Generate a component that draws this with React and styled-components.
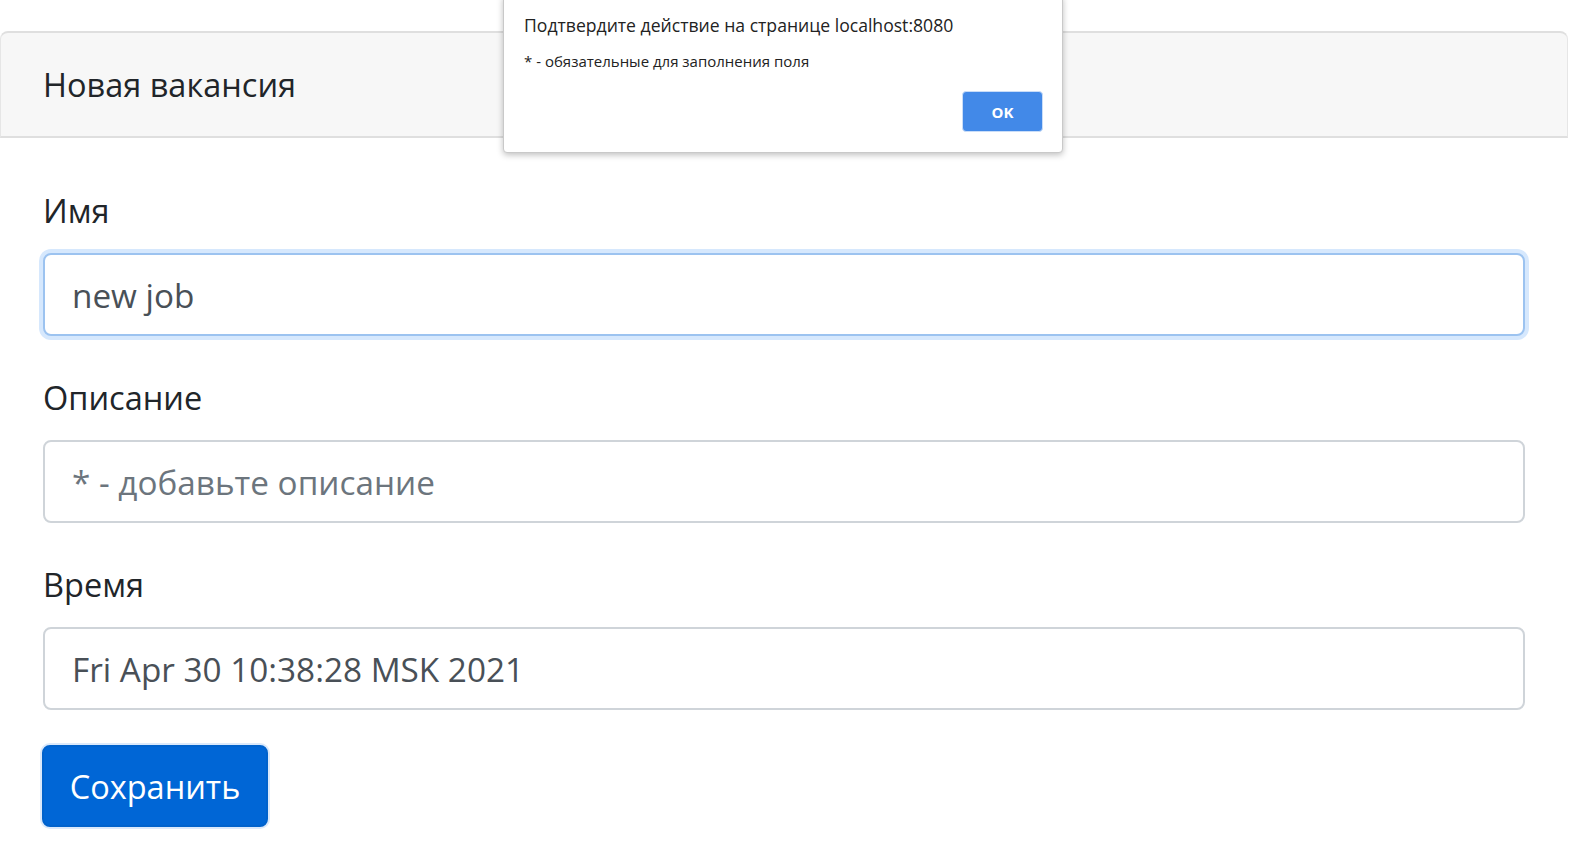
import React from 'react';
import styled, { createGlobalStyle } from 'styled-components';

const GlobalStyle = createGlobalStyle`
  html, body {
    margin: 0;
    padding: 0;
    background: #fff;
  }
  body {
    font-family: "Open Sans", "Noto Sans", sans-serif;
    color: #212529;
  }
`;

const Page = () => (
  <Wrap>
    <GlobalStyle />
    <Card>
      <CardHeader>Новая вакансия</CardHeader>
      <CardBody>
        <FormGroup>
          <Label>Имя</Label>
          <Input defaultValue="new job" $focused />
        </FormGroup>
        <FormGroup>
          <Label>Описание</Label>
          <Input placeholder="* - добавьте описание" />
        </FormGroup>
        <FormGroup>
          <Label>Время</Label>
          <Input defaultValue="Fri Apr 30 10:38:28 MSK 2021" />
        </FormGroup>
        <SaveButton type="button">Сохранить</SaveButton>
      </CardBody>
    </Card>

    <Dialog>
      <DialogTitle>Подтвердите действие на странице localhost:8080</DialogTitle>
      <DialogMessage>* - обязательные для заполнения поля</DialogMessage>
      <DialogFooter>
        <OkButton type="button">OK</OkButton>
      </DialogFooter>
    </Dialog>
  </Wrap>
);

export default Page;

// region STYLES

const Wrap = styled.div`
  position: relative;
  width: 1570px;
  height: 867px;
  overflow: hidden;
  padding-top: 31px;
  box-sizing: border-box;
`;

const Card = styled.div`
  width: 1568px;
`;

const CardHeader = styled.div`
  background: #f7f7f7;
  border: 2px solid #dfdfdf;
  border-left-color: #e6e6e6;
  border-right-color: #e6e6e6;
  border-left-width: 1px;
  border-right-width: 1px;
  border-radius: 8px 8px 0 0;
  height: 107px;
  box-sizing: border-box;
  padding: 0 42px;
  display: flex;
  align-items: center;
  font-size: 32.5px;
  color: #212529;
`;

const CardBody = styled.div`
  padding: 48px 42px 40px 43px;
  display: flex;
  flex-direction: column;
`;

const FormGroup = styled.div`
  display: flex;
  flex-direction: column;
  margin-bottom: 37px;
`;

const Label = styled.label`
  font-size: 32.5px;
  line-height: 50px;
  margin-bottom: 17px;
  color: #212529;
`;

const Input = styled.input`
  height: 83px;
  box-sizing: border-box;
  width: 1482px;
  border: 2px solid ${({ $focused }) => ($focused ? '#9cc3f0' : '#cfd4d9')};
  border-radius: 8px;
  padding: 0 27px;
  font-family: "Open Sans", "Noto Sans", sans-serif;
  font-size: 33.3px;
  color: #495057;
  background: #fff;
  outline: none;
  box-shadow: ${({ $focused }) => ($focused ? '0 0 0 4px #d6e8fd' : 'none')};

  &::placeholder {
    color: #6c757d;
  }
`;

const SaveButton = styled.button`
  align-self: flex-start;
  margin-top: -2px;
  margin-left: -1px;
  width: 226px;
  height: 82px;
  background: #0066d6;
  border: 2px solid #0062cc;
  border-radius: 8px;
  box-shadow: 0 0 0 2px #dbe9fb;
  color: #fff;
  font-family: "Open Sans", "Noto Sans", sans-serif;
  font-size: 32.5px;
  padding: 0;
`;

const Dialog = styled.div`
  position: absolute;
  left: 503px;
  top: -4px;
  width: 560px;
  height: 157px;
  box-sizing: border-box;
  background: #fff;
  border: 1px solid #c9c9c9;
  border-radius: 0 0 4px 4px;
  box-shadow: 0 2px 6px rgba(0, 0, 0, 0.25);
  padding: 16px 19px 0 20px;
  font-family: "Open Sans", "Noto Sans", sans-serif;
`;

const DialogTitle = styled.div`
  font-size: 17.6px;
  line-height: 24px;
  color: #222;
`;

const DialogMessage = styled.div`
  font-size: 15px;
  line-height: 20px;
  color: #222;
  margin-top: 14px;
`;

const DialogFooter = styled.div`
  display: flex;
  justify-content: flex-end;
  margin-top: 20px;
`;

const OkButton = styled.button`
  width: 81px;
  height: 41px;
  background: #4289e8;
  border: 1px solid #c9ddf8;
  border-radius: 4px;
  color: #fff;
  font-family: "Open Sans", "Noto Sans", sans-serif;
  font-weight: 700;
  font-size: 15px;
  padding: 0;
`;

// endregion
